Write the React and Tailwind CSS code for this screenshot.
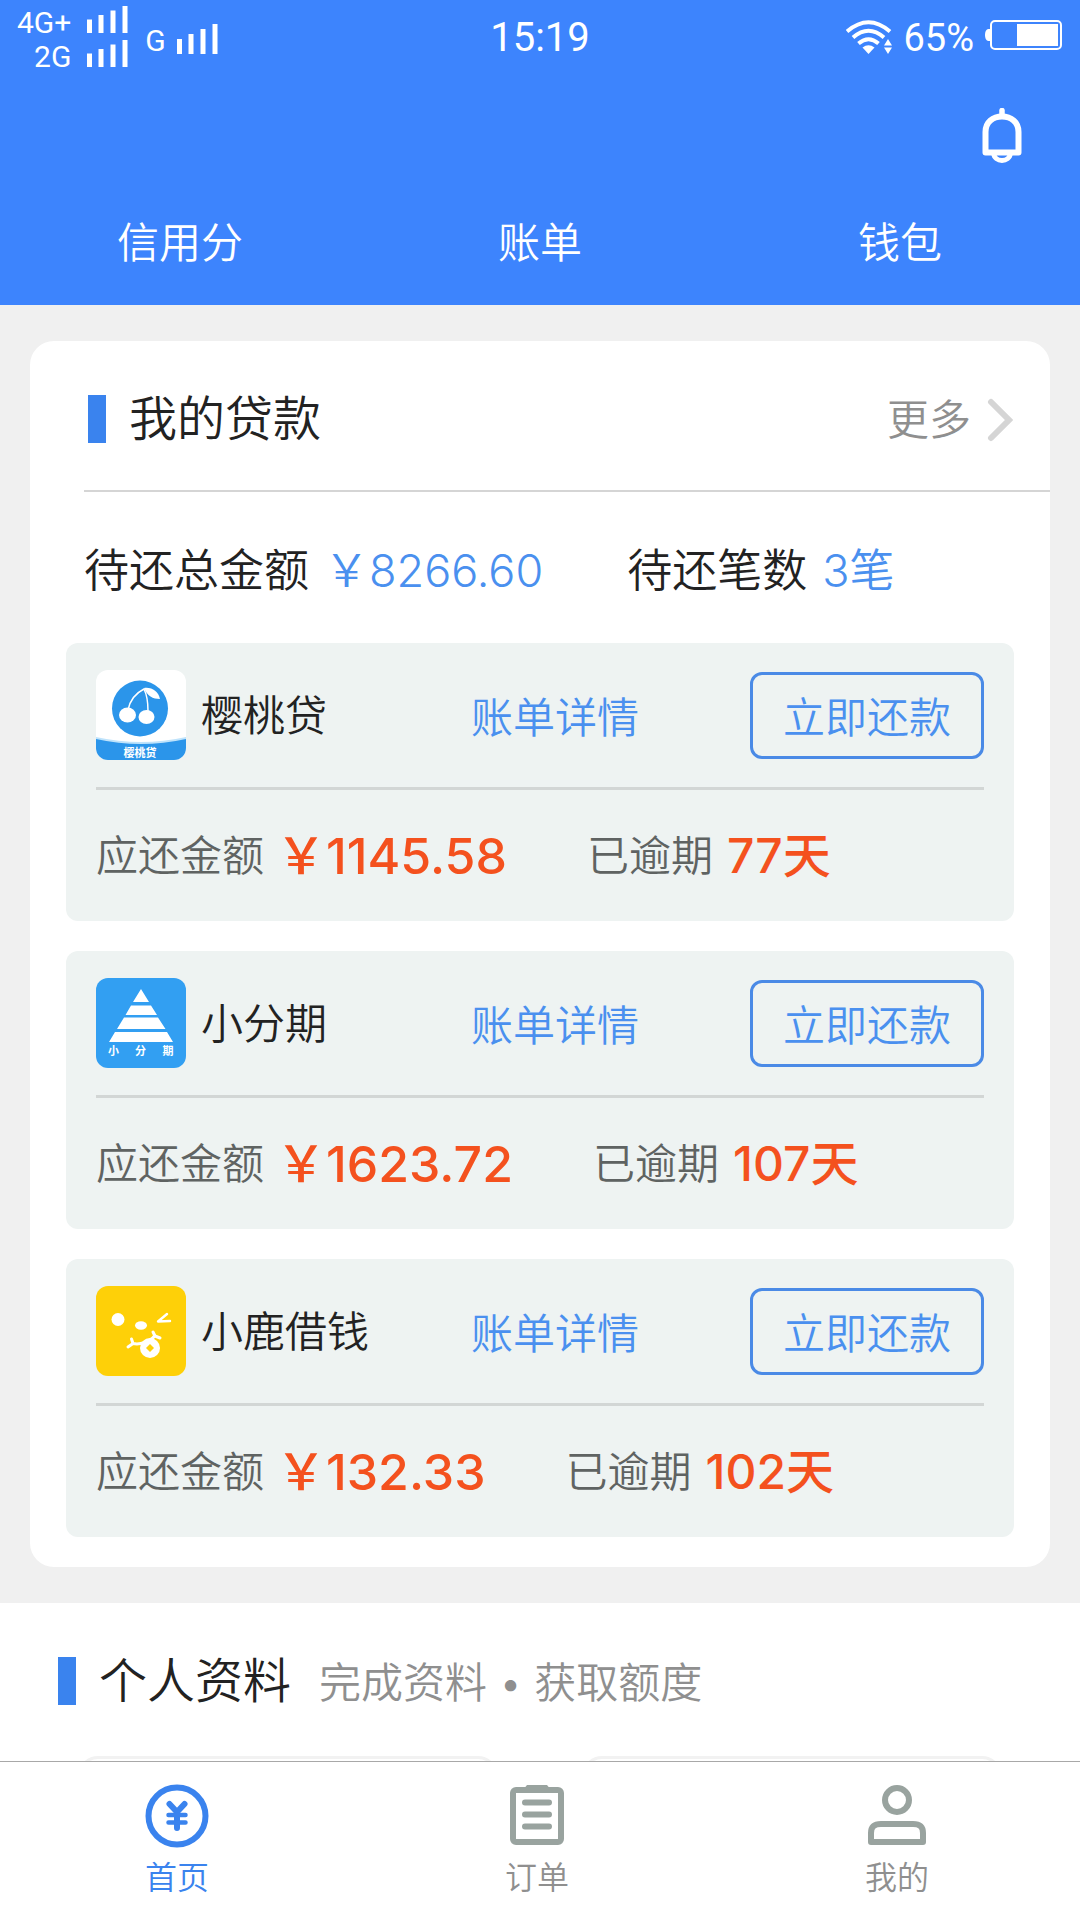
import { useState } from 'react';

const loans = [
  { id: 'yingtao', name: '樱桃贷', Logo: CherryLogo, amount: '1145.58', days: 77 },
  { id: 'xiaofenqi', name: '小分期', Logo: PyramidLogo, amount: '1623.72', days: 107 },
  { id: 'xiaolu', name: '小鹿借钱', Logo: DeerLogo, amount: '132.33', days: 102 },
];

const navItems = [
  { id: 'home', label: '首页', Icon: YuanIcon },
  { id: 'orders', label: '订单', Icon: OrderIcon },
  { id: 'mine', label: '我的', Icon: UserIcon },
];

function CherryLogo() {
  return (
    <svg viewBox="0 0 90 90" className="size-[90px] shrink-0 rounded-[12px]">
      <rect width="90" height="90" fill="#fff" />
      <circle cx="44" cy="38.5" r="28" fill="#2b95ea" />
      <path d="M32 40C34 30 40 23 48 19C51 25 52 32 52 41" fill="none" stroke="#fff" strokeWidth="1.5" />
      <path d="M48 18C56 17 62 21 64 29C57 29 51 26 48 18Z" fill="#fff" />
      <ellipse cx="31.5" cy="45" rx="8.5" ry="7.5" fill="#fff" />
      <ellipse cx="50.5" cy="47" rx="8" ry="7" fill="#fff" />
      <path d="M0 67Q45 77 90 67V72Q45 80 0 72Z" fill="#bfe3fb" />
      <path d="M0 69Q45 79 90 69V90H0Z" fill="#2b95ea" />
      <text x="44" y="87" textAnchor="middle" fontSize="11" fontWeight="700" fill="#fff">樱桃贷</text>
    </svg>
  );
}

function PyramidLogo() {
  return (
    <svg viewBox="0 0 90 90" className="size-[90px] shrink-0 rounded-[12px]">
      <rect width="90" height="90" fill="#329ff2" />
      <path d="M45 11L53 24H37ZM35 27.500H55L61 37H29.500ZM28 39.500H62L69.500 51H21ZM19 54H71L77 64H13Z" fill="#fff" />
      <g fontSize="11" fontWeight="700" fill="#fff" textAnchor="middle">
        <text x="17.500" y="77">小</text>
        <text x="44.500" y="77">分</text>
        <text x="72" y="77">期</text>
      </g>
    </svg>
  );
}

function DeerLogo() {
  return (
    <svg viewBox="0 0 90 90" className="size-[90px] shrink-0 rounded-[12px]">
      <rect width="90" height="90" fill="#fed008" />
      <circle cx="22" cy="33.500" r="6.500" fill="#fff" />
      <ellipse cx="45" cy="39.500" rx="6" ry="4.200" fill="#fff" />
      <g fill="none" stroke="#fff" strokeWidth="2.400" strokeLinecap="round" strokeLinejoin="round">
        <path d="M71 28L62 35.500L74 35" />
        <path d="M35.500 53L37 57.500L32 61M37 57.500C44 59 54 56 59 49.500M57 46L59 50L64 52" strokeWidth="3" />
      </g>
      <circle cx="54" cy="62" r="10" fill="#fff" />
      <path d="M54 58L58 62L54 66L50 62Z" fill="#fed008" />
    </svg>
  );
}

function SignalBars({ className }) {
  return (
    <svg viewBox="0 0 41 30" preserveAspectRatio="none" className={className} fill="currentColor">
      <rect x="0" y="15" width="5" height="15" />
      <rect x="11.500" y="10" width="5" height="20" />
      <rect x="23.500" y="5" width="5" height="25" />
      <rect x="35.500" y="0" width="5" height="30" />
    </svg>
  );
}

function WifiIcon() {
  return (
    <svg viewBox="0 0 46 34" className="h-[34px] w-[46px]">
      <g fill="none" stroke="currentColor" strokeWidth="4">
        <path d="M1 11.500Q22.500 -7 44 11.500" />
        <path d="M7 17.500Q22.500 4 38 17.500" />
        <path d="M12.500 23.500Q22.500 15 32.500 23.500" />
      </g>
      <path d="M16.500 27.500Q22.500 23 28.500 27.500L22.500 34Z" fill="currentColor" />
      <path d="M42 19L46 25.500H38ZM42 34L38 27.500H46Z" fill="currentColor" />
    </svg>
  );
}

function BatteryIcon() {
  return (
    <svg viewBox="0 0 78 30" className="h-[30px] w-[78px]">
      <path d="M5 9H3Q0 10 0 15Q0 20 3 21H5Z" fill="currentColor" />
      <rect x="6" y="1" width="70" height="28" rx="4" fill="none" stroke="currentColor" strokeWidth="2" />
      <rect x="32" y="4" width="41" height="22" fill="currentColor" />
    </svg>
  );
}

function BellIcon() {
  return (
    <svg viewBox="0 0 40 56" className="h-[56px] w-[40px]" fill="none" stroke="currentColor">
      <path d="M20 2.500V8" strokeWidth="5.500" strokeLinecap="round" />
      <path d="M3.500 44.500V24C3.500 14 11 8.500 20 8.500S36.500 14 36.500 24V44.500Z" strokeWidth="6" strokeLinejoin="round" />
      <path d="M11.500 45C12 50 16 52.500 20 52.500S28 50 28.500 45" strokeWidth="5" />
    </svg>
  );
}

function YuanIcon() {
  return (
    <svg viewBox="0 0 64 64" className="size-[64px]" fill="none" stroke="currentColor" strokeLinecap="round">
      <circle cx="32" cy="32" r="28.500" strokeWidth="6" />
      <path d="M24.500 20L32 28L39.500 20M32 28V44" strokeWidth="6" strokeLinejoin="round" />
      <path d="M23.500 31H40.500M23.500 38.500H40.500" strokeWidth="4.500" />
    </svg>
  );
}

function OrderIcon() {
  return (
    <svg viewBox="0 0 64 64" className="size-[64px]" fill="none" stroke="currentColor" strokeLinecap="round">
      <rect x="8" y="6" width="48" height="52" rx="3" strokeWidth="6" />
      <path d="M20 3.500L22 1H42L44 3.500V7H20Z" fill="currentColor" stroke="none" />
      <path d="M20 18.500H44M20 30.500H44M20 42.500H44" strokeWidth="6" />
    </svg>
  );
}

function UserIcon() {
  return (
    <svg viewBox="0 0 64 64" className="size-[64px]" fill="none" stroke="currentColor" strokeWidth="6">
      <circle cx="32" cy="16" r="12" />
      <path d="M6 58V49C6 42 10 40 16 40H48C54 40 58 42 58 49V58Z" strokeLinejoin="round" />
    </svg>
  );
}

function StatusBar() {
  return (
    <div className="grid grid-cols-3 px-[17px] pt-[6px] font-[Roboto,'Noto_Sans_CJK_SC',sans-serif] font-normal">
      <div className="flex gap-[17px]">
        <div className="flex flex-col items-end text-[30px] leading-[34px]">
          <div className="flex gap-[16px]">
            <span>4G+</span>
            <SignalBars className="h-[27px] w-[41px]" />
          </div>
          <div className="flex gap-[16px]">
            <span>2G</span>
            <SignalBars className="h-[27px] w-[41px]" />
          </div>
        </div>
        <div className="flex items-end gap-[11px] pb-[20px] text-[30px] leading-[26px]">
          <span>G</span>
          <SignalBars className="h-[30px] w-[41px]" />
        </div>
      </div>
      <div className="pt-[12px] text-center text-[40px] leading-[40px]">15:19</div>
      <div className="flex items-start justify-end gap-[11px] pt-[14px]">
        <WifiIcon />
        <span className="text-[38px] leading-[36px]">65%</span>
        <BatteryIcon />
      </div>
    </div>
  );
}

function LoanItem({ loan }) {
  const { name, Logo, amount, days } = loan;

  return (
    <li className="h-[278px] rounded-[12px] bg-[#eef3f2] px-[30px] pt-[27px]">
      <div className="flex items-center border-b-3 border-[#d2d6d5] pb-[27px]">
        <Logo />
        <span className="ml-[15px] flex-1 pt-[2px] text-[42px] leading-[60px] text-[#222]">{name}</span>
        <a href="#bill" className="mr-[111px] pt-[6px] text-[42px] leading-[60px] text-[#4a90ef]">账单详情</a>
        <button
          type="button"
          className="h-[87px] w-[234px] rounded-[12px] border-3 border-[#4a8ae6] pt-[6px] text-[42px] leading-[60px] text-[#4a90ef]"
        >
          立即还款
        </button>
      </div>
      <div className="flex items-center pt-[31px] leading-[70px]">
        <span className="text-[42px] text-[#5f6362]">应还金额</span>
        <span className="ml-[12px] text-[50px] font-medium text-[#f4511e]">￥{amount}</span>
        <span className="ml-[80px] text-[42px] text-[#5f6362]">已逾期</span>
        <span className="ml-[14px] text-[48px] font-medium text-[#f4511e]">{days}天</span>
      </div>
    </li>
  );
}

export default function App() {
  const [active, setActive] = useState('home');

  return (
    <div className="flex h-screen flex-col bg-[#f0f0f0] font-[Inter,'Noto_Sans_CJK_SC',sans-serif] font-[350]">
      <header className="h-[305px] shrink-0 bg-[#3d84fd] text-white">
        <StatusBar />
        <div className="flex justify-end px-[58px] pt-[34px]">
          <button type="button" aria-label="消息">
            <BellIcon />
          </button>
        </div>
        <div className="mt-[49px] grid grid-cols-3 text-center text-[42px] leading-[60px]">
          <a href="#credit">信用分</a>
          <a href="#bills">账单</a>
          <a href="#wallet">钱包</a>
        </div>
      </header>

      <main className="min-h-0 flex-1 overflow-y-auto pt-[36px] [scrollbar-width:none]">
        <section className="mx-[30px] rounded-[24px] bg-white pb-[30px]">
          <div className="ml-[54px] flex h-[151px] items-center border-b-2 border-[#d5d5d5] pl-[4px] pr-[37px] pt-[6px]">
            <span className="h-[48px] w-[18px] bg-[#3a83ee]" />
            <h2 className="ml-[23px] flex-1 text-[48px] leading-[72px] text-[#222]">我的贷款</h2>
            <a href="#more" className="flex items-center gap-[16px] pt-[3px] text-[42px] leading-[60px] text-[#8f8f8f]">
              更多
              <svg viewBox="0 0 26 44" className="h-[44px] w-[26px]" fill="none" stroke="#d5d5d5" strokeWidth="6" strokeLinecap="round">
                <path d="M4 4L22 22L4 40" />
              </svg>
            </a>
          </div>

          <div className="flex items-center px-[54px] pb-[36px] pt-[43px] text-[45px] leading-[72px] text-[#222]">
            <span>待还总金额</span>
            <span className="ml-[15px] text-[#4a90ef]">￥8266.60</span>
            <span className="ml-[84px]">待还笔数</span>
            <span className="ml-[15px] text-[#4a90ef]">3笔</span>
          </div>

          <ul className="mx-[36px] flex flex-col gap-[30px]">
            {loans.map((loan) => (
              <LoanItem key={loan.id} loan={loan} />
            ))}
          </ul>
        </section>

        <section className="mt-[36px] bg-white pt-[42px]">
          <div className="flex items-center pl-[58px]">
            <span className="h-[48px] w-[18px] bg-[#3a83ee]" />
            <h2 className="ml-[23px] text-[48px] leading-[72px] text-[#222]">个人资料</h2>
            <p className="ml-[28px] pt-[4px] text-[42px] leading-[60px] text-[#8f8f8f]">完成资料 • 获取额度</p>
          </div>
          <div className="mt-[39px] grid grid-cols-2 gap-[84px] px-[78px]">
            <div className="h-[180px] rounded-[20px] border-3 border-[#f2f2f2]" />
            <div className="h-[180px] rounded-[20px] border-3 border-[#f2f2f2]" />
          </div>
        </section>
      </main>

      <nav className="grid h-[159px] shrink-0 grid-cols-3 border-t border-[#a8a8a8] bg-white">
        {navItems.map(({ id, label, Icon }) => (
          <button
            key={id}
            type="button"
            onClick={() => setActive(id)}
            className={`flex flex-col items-center gap-[6px] pr-[6px] pt-[22px] ${active === id ? 'text-[#3a83ee]' : 'text-[#99a39f]'}`}
          >
            <Icon />
            <span className={`text-[32px] leading-[48px] ${active === id ? '' : 'text-[#8f8f8f]'}`}>{label}</span>
          </button>
        ))}
      </nav>
    </div>
  );
}
